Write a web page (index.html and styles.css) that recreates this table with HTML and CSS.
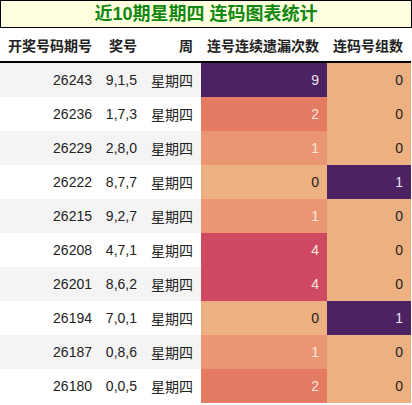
FILE: index.html
```html
<!DOCTYPE html>
<html lang="zh">
<head>
    <meta charset="UTF-8">
    <title>连码图表统计</title>
    <link rel="stylesheet" href="styles.css">
</head>
<body>

<div class="title">近10期星期四 连码图表统计</div>

<table class="stats">
    <colgroup>
        <col class="c-issue">
        <col class="c-nums">
        <col class="c-week">
        <col class="c-miss">
        <col class="c-group">
    </colgroup>
    <thead>
    <tr>
        <th>开奖号码期号</th>
        <th>奖号</th>
        <th>周</th>
        <th>连号连续遗漏次数</th>
        <th>连码号组数</th>
    </tr>
    </thead>
    <tbody>
    <tr><td>26243</td><td>9,1,5</td><td>星期四</td><td class="h9">9</td><td class="h0">0</td></tr>
    <tr><td>26236</td><td>1,7,3</td><td>星期四</td><td class="h2">2</td><td class="h0">0</td></tr>
    <tr><td>26229</td><td>2,8,0</td><td>星期四</td><td class="h1">1</td><td class="h0">0</td></tr>
    <tr><td>26222</td><td>8,7,7</td><td>星期四</td><td class="h0">0</td><td class="h9">1</td></tr>
    <tr><td>26215</td><td>9,2,7</td><td>星期四</td><td class="h1">1</td><td class="h0">0</td></tr>
    <tr><td>26208</td><td>4,7,1</td><td>星期四</td><td class="h4">4</td><td class="h0">0</td></tr>
    <tr><td>26201</td><td>8,6,2</td><td>星期四</td><td class="h4">4</td><td class="h0">0</td></tr>
    <tr><td>26194</td><td>7,0,1</td><td>星期四</td><td class="h0">0</td><td class="h9">1</td></tr>
    <tr><td>26187</td><td>0,8,6</td><td>星期四</td><td class="h1">1</td><td class="h0">0</td></tr>
    <tr><td>26180</td><td>0,0,5</td><td>星期四</td><td class="h2">2</td><td class="h0">0</td></tr>
    </tbody>
</table>

</body>
</html>
```

FILE: styles.css
```css
body {
    margin: 0;
    padding: 0;
    font-family: "Liberation Sans", "Noto Sans CJK SC", sans-serif;
    color: #222;
}

.title {
    width: 410px;
    height: 26px;
    line-height: 26px;
    border: 1px solid #000;
    background: #ffffe0;
    color: #118811;
    font-size: 18px;
    font-weight: bold;
    text-align: center;
}

.stats {
    width: 411px;
    border-collapse: collapse;
    table-layout: fixed;
    font-size: 14px;
}

.c-issue { width: 100px; }
.c-nums { width: 45px; }
.c-week { width: 56px; }
.c-miss { width: 126px; }
.c-group { width: 84px; }

.stats th {
    height: 33px;
    padding: 0 8px 0 0;
    text-align: right;
    font-weight: bold;
    white-space: nowrap;
    border-bottom: 2px solid #000;
}

.stats td {
    height: 34px;
    padding: 0 8px 0 0;
    text-align: right;
    white-space: nowrap;
}

.stats tbody tr:nth-child(odd) {
    background: #f4f4f4;
}

.h0 { background: #edb081; color: #222; }
.h1 { background: #ea9673; color: #fbe8dc; }
.h2 { background: #e57b62; color: #fbe8dc; }
.h4 { background: #cf4963; color: #fbe8dc; }
.h9 { background: #4b2362; color: #eee4ee; }
```
